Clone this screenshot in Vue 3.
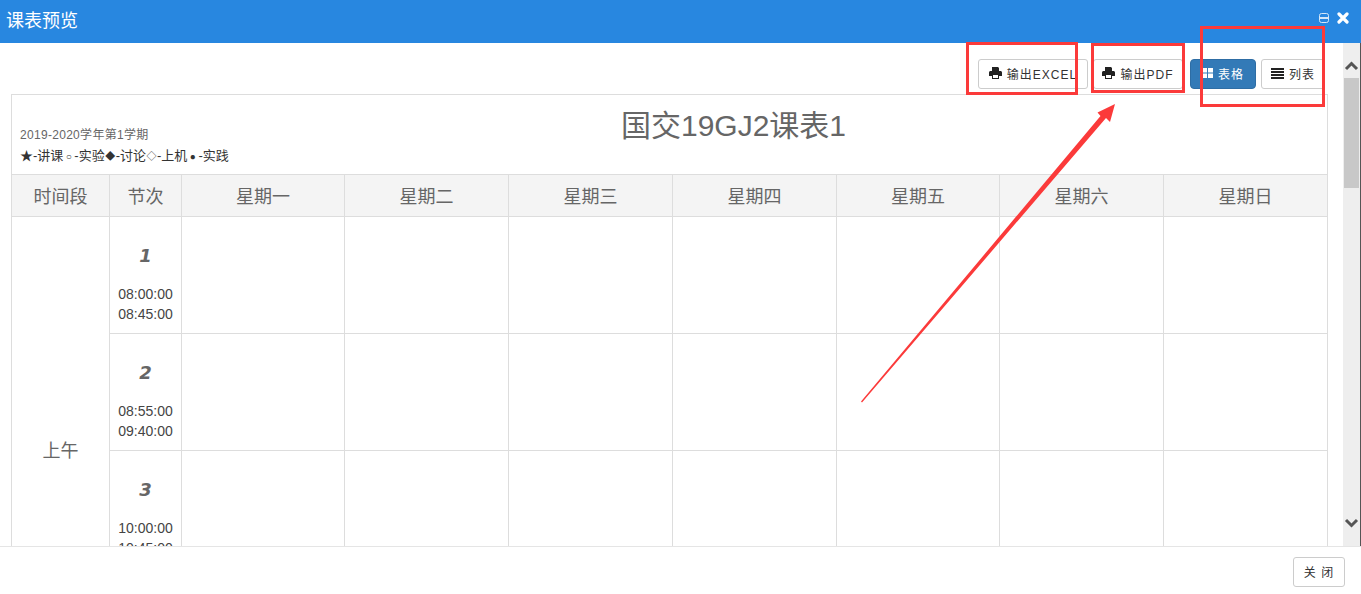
<script setup>
const days = ['星期一', '星期二', '星期三', '星期四', '星期五', '星期六', '星期日']
const periods = [
  { n: 1, a: '08:00:00', b: '08:45:00' },
  { n: 2, a: '08:55:00', b: '09:40:00' },
  { n: 3, a: '10:00:00', b: '10:45:00' }
]
const legend = [
  ['○', '实验'],
  ['◆', '讨论'],
  ['◇', '上机'],
  ['●', '实践']
]
</script>

<template>
  <div class="dialog">
    <header class="head">
      <span class="title">课表预览</span>
      <span class="ctrls">
        <svg width="10" height="10" viewBox="0 0 10 10"><rect x="0.5" y="0.5" width="9" height="9" rx="2" fill="none" stroke="#d5e7f8"/><rect x="1" y="4" width="8" height="2" fill="#d5e7f8"/></svg>
        <svg width="12" height="12" viewBox="0 0 12 12"><path d="M2 2 L10 10 M10 2 L2 10" stroke="#fff" stroke-width="3.200" stroke-linecap="round"/></svg>
      </span>
    </header>

    <div class="middle">
      <main class="content">
        <div class="toolbar">
          <button class="btn excel">
            <svg class="ico" width="13" height="12" viewBox="0 0 13 12"><path d="M3 0h6l1 1v3H3zM0 5.500C0 4.700.7 4 1.500 4h10c.8 0 1.500.7 1.500 1.500V9h-3v3H3V9H0zM4 8v3h5V8z" fill="#222" fill-rule="evenodd"/></svg>
            输出EXCEL
          </button>
          <button class="btn pdf">
            <svg class="ico" width="13" height="12" viewBox="0 0 13 12"><path d="M3 0h6l1 1v3H3zM0 5.500C0 4.700.7 4 1.500 4h10c.8 0 1.500.7 1.500 1.500V9h-3v3H3V9H0zM4 8v3h5V8z" fill="#222" fill-rule="evenodd"/></svg>
            输出PDF
          </button>
          <button class="btn primary">
            <svg class="ico" width="11" height="10" viewBox="0 0 11 10"><path d="M0 0h5v4.500H0zM6 0h5v4.500H6zM0 5.500h5V10H0zM6 5.500h5V10H6z" fill="#fff"/></svg>
            表格
          </button>
          <button class="btn list">
            <svg class="ico" width="13" height="11" viewBox="0 0 13 11"><path d="M0 0h13v2H0zM0 3h13v2H0zM0 6h13v2H0zM0 9h13v2H0z" fill="#222"/></svg>
            列表
          </button>
        </div>

        <div class="sheet">
          <div class="sheet-head">
            <div class="meta">
              <div class="term">2019-2020学年第1学期</div>
              <div class="legend">★-讲课<template v-for="l in legend" :key="l[0]"><span class="sym">{{ l[0] }}</span>-{{ l[1] }}</template></div>
            </div>
            <h1 class="sheet-title">国交19GJ2课表1</h1>
          </div>
          <div class="grid">
            <div class="th">时间段</div>
            <div class="th">节次</div>
            <div v-for="d in days" :key="d" class="th">{{ d }}</div>
            <div class="slot">上午</div>
            <template v-for="p in periods" :key="p.n">
              <div class="period">
                <b class="num">{{ p.n }}</b>
                <span class="time">{{ p.a }}</span>
                <span class="time">{{ p.b }}</span>
              </div>
              <div v-for="d in days" :key="d" class="cell"></div>
            </template>
          </div>
        </div>
      </main>

      <aside class="scrollbar">
        <div class="arrow-box up">
          <svg width="17" height="14" viewBox="0 0 17 14"><path d="M3 10 L8.500 4.500 L14 10" fill="none" stroke="#555" stroke-width="3"/></svg>
        </div>
        <div class="thumb"></div>
        <div class="rest"></div>
        <div class="arrow-box down">
          <svg width="17" height="14" viewBox="0 0 17 14"><path d="M3 4 L8.500 9.500 L14 4" fill="none" stroke="#555" stroke-width="3"/></svg>
        </div>
      </aside>
    </div>

    <footer class="foot">
      <button class="btn close">关 闭</button>
    </footer>

    <div class="mark m1"></div>
    <div class="mark m2"></div>
    <div class="mark m3"></div>
    <svg class="pointer" width="1361" height="594" viewBox="0 0 1361 594">
      <path d="M861 401.500 L1100.500 116 L1097.500 112.500 L1115 104 L1110 122 L1106 118 L862 402.500 Z" fill="#fb3a3a"/>
    </svg>
  </div>
</template>

<style>
html, body { margin: 0; background: #fff; }
</style>

<style scoped>
.dialog {
  position: relative;
  width: 1361px;
  height: 594px;
  display: flex;
  flex-direction: column;
  overflow: hidden;
  background: #fff;
  font-family: "Liberation Sans", "Noto Sans CJK SC", sans-serif;
  color: #666;
}
.head {
  height: 43px;
  flex: none;
  background: #2887e0;
  display: flex;
  align-items: center;
  justify-content: space-between;
  padding: 0 12px 0 6px;
  box-sizing: border-box;
}
.title { color: #fff; font-size: 18px; line-height: 43px; }
.ctrls { display: flex; align-items: center; gap: 8px; margin-top: -7px; }
.middle { flex: 1; min-height: 0; display: flex; }
.content { flex: 1; min-width: 0; overflow: hidden; padding: 0 0 0 11px; }
.toolbar {
  width: 1314px;
  height: 51px;
  display: flex;
  align-items: flex-start;
  justify-content: flex-end;
  padding-top: 16px;
  box-sizing: border-box;
}
.btn {
  height: 30px;
  border: 1px solid #ccc;
  border-radius: 3px;
  background: #fff;
  color: #333;
  font-family: inherit;
  font-size: 12px;
  letter-spacing: 1px;
  display: flex;
  align-items: center;
  justify-content: center;
  gap: 5px;
  padding: 0 0 2px;
  box-sizing: border-box;
}
.ico { flex: none; }
.excel { width: 110px; }
.pdf { width: 90px; margin-left: 5px; }
.primary { width: 66px; margin-left: 7px; background: #337ab7; border-color: #2e6da4; color: #fff; border-radius: 4px; }
.list { width: 64px; margin-left: 5px; }
.sheet { width: 1317px; border: 1px solid #ddd; border-bottom: 0; box-sizing: border-box; }
.sheet-head { height: 79px; position: relative; }
.meta { position: absolute; left: 8px; top: 32px; }
.term { font-size: 12px; line-height: 16px; color: #666; letter-spacing: 0.3px; }
.legend { font-size: 13px; line-height: 18px; color: #333; margin-top: 4px; white-space: nowrap; }
.sym { display: inline-block; width: 11px; text-align: center; font-size: 10px; }
.sheet-title {
  margin: 0;
  padding-top: 9px;
  text-align: center;
  font-size: 30px;
  line-height: 44px;
  font-weight: 400;
  color: #666;
  padding-left: 128px;
}
.grid {
  display: grid;
  grid-template-columns: 98px 72px 163px 164px 164px 164px 163px 164px 164px;
  grid-template-rows: 43px repeat(3, 117px);
  margin-right: -1px;
}
.th {
  background: #f4f4f4;
  border-top: 1px solid #ddd;
  border-bottom: 1px solid #ddd;
  border-right: 1px solid #ddd;
  font-size: 18px;
  display: flex;
  align-items: center;
  justify-content: center;
  box-sizing: border-box;
  color: #666;
  padding-bottom: 2px;
}
.slot {
  grid-row: 2 / span 3;
  border-right: 1px solid #ddd;
  font-size: 18px;
  text-align: center;
  padding-top: 222px;
  line-height: 24px;
  box-sizing: border-box;
}
.period {
  border-right: 1px solid #ddd;
  border-bottom: 1px solid #ddd;
  display: flex;
  flex-direction: column;
  align-items: center;
  box-sizing: border-box;
  padding-top: 27px;
}
.num { font-size: 18px; line-height: 24px; font-style: italic; font-weight: 700; color: #666; font-family: "DejaVu Sans", sans-serif; margin-bottom: 16px; }
.time { font-size: 14px; line-height: 20px; color: #444; }
.cell { border-right: 1px solid #ddd; border-bottom: 1px solid #ddd; box-sizing: border-box; }
.scrollbar {
  width: 18px;
  flex: none;
  background: #eee;
  display: flex;
  flex-direction: column;
  box-sizing: border-box;
  border-right: 1px solid #555;
}
.arrow-box { flex: none; display: flex; justify-content: center; }
.arrow-box svg { display: block; }
.up { height: 35px; padding-top: 16px; box-sizing: border-box; }
.down { height: 30px; }
.thumb { height: 110px; background: #c8c8c8; flex: none; margin: 0 1px; }
.rest { flex: 1; }
.foot {
  height: 48px;
  flex: none;
  border-top: 1px solid #e5e5e5;
  box-sizing: border-box;
  display: flex;
  justify-content: flex-end;
  align-items: flex-start;
  padding: 10px 16px 0 0;
  background: #fff;
}
.close { width: 52px; }
.mark { position: absolute; border: 3px solid #fb3a3a; box-sizing: border-box; pointer-events: none; }
.m1 { left: 966px; top: 42px; width: 112px; height: 53px; }
.m2 { left: 1091px; top: 43px; width: 94px; height: 50px; }
.m3 { left: 1200px; top: 26px; width: 125px; height: 81px; }
.pointer { position: absolute; left: 0; top: 0; pointer-events: none; }
</style>
